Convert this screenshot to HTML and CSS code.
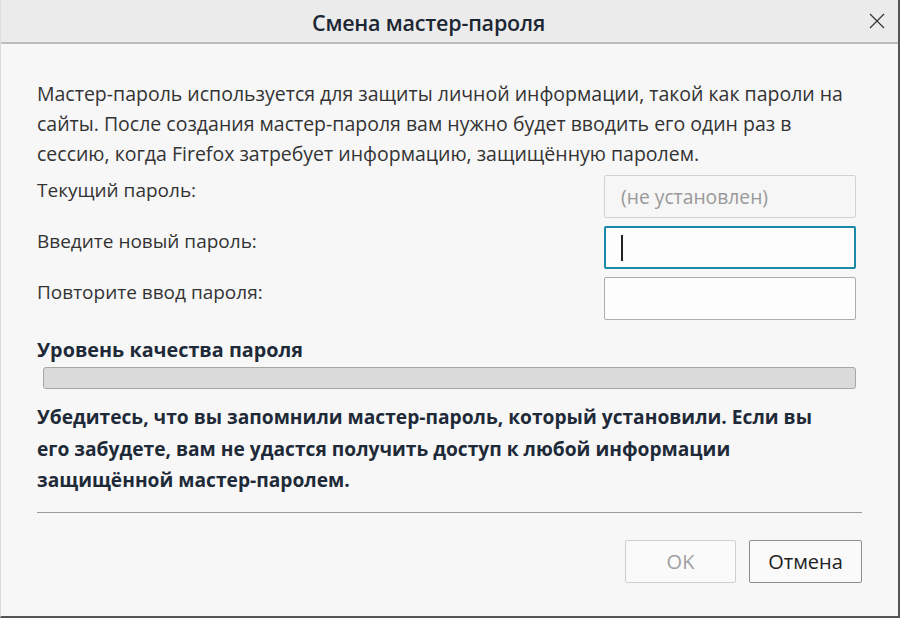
FILE: index.html
```html
<!DOCTYPE html>
<html lang="ru">
<head>
<meta charset="utf-8">
<title>Смена мастер-пароля</title>
<link rel="stylesheet" href="styles.css">
</head>
<body>
<div class="dialog">
  <div class="titlebar">
    <div class="title">Смена мастер-пароля</div>
    <div class="close" aria-label="Закрыть">
      <svg width="16" height="16" viewBox="0 0 16 16"><path d="M1 1 L15 15 M15 1 L1 15" stroke="#333" stroke-width="1.2" fill="none"/></svg>
    </div>
  </div>
  <div class="content">
    <p class="intro">Мастер-пароль используется для защиты личной информации, такой как пароли на<br>сайты. После создания мастер-пароля вам нужно будет вводить его один раз в<br>сессию, когда Firefox затребует информацию, защищённую паролем.</p>
    <div class="fields">
      <label class="label">Текущий пароль:</label>
      <div class="input disabled">(не установлен)</div>
      <label class="label">Введите новый пароль:</label>
      <div class="input focused"><span class="caret"></span></div>
      <label class="label">Повторите ввод пароля:</label>
      <div class="input"></div>
    </div>
    <div class="quality-title">Уровень качества пароля</div>
    <div class="meter"></div>
    <p class="warning">Убедитесь, что вы запомнили мастер-пароль, который установили. Если вы<br>его забудете, вам не удастся получить доступ к любой информации<br>защищённой мастер-паролем.</p>
    <div class="separator"></div>
    <div class="buttons">
      <div class="btn btn-disabled">OK</div>
      <div class="btn">Отмена</div>
    </div>
  </div>
</div>
</body>
</html>
```

FILE: styles.css
```css
html, body {
  margin: 0;
  padding: 0;
}
body {
  width: 900px;
  height: 618px;
  background: #f7f7f7;
  font-family: "Open Sans", "Noto Sans", sans-serif;
  color: #333;
  overflow: hidden;
}
.dialog {
  box-sizing: border-box;
  width: 900px;
  height: 618px;
  border-right: 2px solid #555;
  border-bottom: 2px solid #555;
  border-left: 1px solid #ddd;
  background: #f7f7f7;
  display: flex;
  flex-direction: column;
}
.titlebar {
  height: 42px;
  background: #ebebeb;
  border-bottom: 2px solid #bdbdbd;
  display: flex;
  align-items: center;
  justify-content: center;
  position: relative;
}
.title {
  font-size: 21.5px;
  font-weight: 600;
  color: #1c2633;
  margin-left: -42px;
  margin-top: 2px;
  letter-spacing: -0.2px;
}
.close {
  position: absolute;
  right: 13px;
  top: 13px;
  width: 16px;
  height: 16px;
  display: flex;
}
.content {
  padding: 0 36px 0 36px;
  display: flex;
  flex-direction: column;
}
.intro {
  margin: 35px 0 0 0;
  font-size: 19.5px;
  line-height: 30px;
  color: #333;
  white-space: nowrap;
}
.fields {
  display: grid;
  grid-template-columns: 1fr 252px;
  row-gap: 8px;
  margin-top: 6px;
  padding-right: 6px;
}
.label {
  font-size: 19px;
  line-height: 30px;
  color: #333;
  align-self: start;
  margin-top: 0;
}
.input {
  box-sizing: border-box;
  height: 43px;
  border: 1px solid #adadad;
  background: #fdfdfd;
  border-radius: 2px;
  font-size: 19.3px;
  line-height: 41px;
  padding-left: 16px;
}
.input.disabled {
  border-color: #d2d2d2;
  background: #f6f6f6;
  color: #999;
}
.input.focused {
  border: 2px solid #1a8aa6;
  padding-left: 15px;
  display: flex;
  align-items: center;
}
.caret {
  width: 2px;
  height: 26px;
  background: #222;
}
.quality-title {
  margin-top: 17px;
  font-size: 19.8px;
  font-weight: 700;
  line-height: 26px;
  color: #1e2a38;
}
.meter {
  box-sizing: border-box;
  margin: 4px 6px 0 6px;
  height: 22px;
  background: #dadada;
  border: 1px solid #a6a6a6;
  border-radius: 3px;
}
.warning {
  margin: 12px 0 0 0;
  font-size: 19.2px;
  font-weight: 700;
  line-height: 31.5px;
  color: #1e2a38;
  white-space: nowrap;
}
.separator {
  margin-top: 16px;
  height: 1px;
  background: #9a9a9a;
}
.buttons {
  display: flex;
  justify-content: flex-end;
  gap: 13px;
  margin-top: 27px;
}
.btn {
  box-sizing: border-box;
  width: 113px;
  height: 43px;
  border: 1px solid #8c8c8c;
  background: #fafafa;
  border-radius: 2px;
  font-size: 20px;
  line-height: 41px;
  text-align: center;
  color: #222;
}
.btn-disabled {
  width: 111px;
  border-color: #cfcfcf;
  color: #a0a0a0;
}
```
